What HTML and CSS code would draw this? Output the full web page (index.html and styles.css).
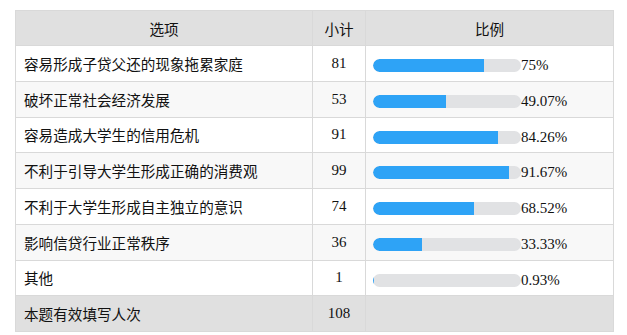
FILE: index.html
```html
<!DOCTYPE html>
<html lang="zh-CN">
<head>
<meta charset="utf-8">
<link rel="stylesheet" href="styles.css">
</head>
<body>
<table class="stats">
  <colgroup>
    <col class="c-opt"><col class="c-cnt"><col class="c-pct">
  </colgroup>
  <thead>
    <tr><th>选项</th><th>小计</th><th>比例</th></tr>
  </thead>
  <tbody>
    <tr><td class="opt">容易形成子贷父还的现象拖累家庭</td><td class="cnt">81</td><td class="pct"><div class="bar"><div class="fill" style="width:75%"></div></div><span class="num">75%</span></td></tr>
    <tr class="alt"><td class="opt">破坏正常社会经济发展</td><td class="cnt">53</td><td class="pct"><div class="bar"><div class="fill" style="width:49.07%"></div></div><span class="num">49.07%</span></td></tr>
    <tr><td class="opt">容易造成大学生的信用危机</td><td class="cnt">91</td><td class="pct"><div class="bar"><div class="fill" style="width:84.26%"></div></div><span class="num">84.26%</span></td></tr>
    <tr class="alt"><td class="opt">不利于引导大学生形成正确的消费观</td><td class="cnt">99</td><td class="pct"><div class="bar"><div class="fill" style="width:91.67%"></div></div><span class="num">91.67%</span></td></tr>
    <tr><td class="opt">不利于大学生形成自主独立的意识</td><td class="cnt">74</td><td class="pct"><div class="bar"><div class="fill" style="width:68.52%"></div></div><span class="num">68.52%</span></td></tr>
    <tr class="alt"><td class="opt">影响信贷行业正常秩序</td><td class="cnt">36</td><td class="pct"><div class="bar"><div class="fill" style="width:33.33%"></div></div><span class="num">33.33%</span></td></tr>
    <tr><td class="opt">其他</td><td class="cnt">1</td><td class="pct"><div class="bar"><div class="fill" style="width:0.93%"></div></div><span class="num">0.93%</span></td></tr>
  </tbody>
  <tfoot>
    <tr><td class="opt">本题有效填写人次</td><td class="cnt">108</td><td></td></tr>
  </tfoot>
</table>
</body>
</html>
```
FILE: styles.css
```css
html, body {
  margin: 0;
  padding: 0;
  background: #ffffff;
}
body {
  padding: 10px 0 0 15px;
  font-family: "Noto Sans CJK SC", "Noto Sans", sans-serif;
  color: #111111;
}
.stats {
  border-collapse: collapse;
  width: 598px;
  table-layout: fixed;
  font-size: 14.6px;
}
.c-opt { width: 297px; }
.c-cnt { width: 53px; }
.c-pct { width: 248px; }
.stats th, .stats td {
  border: 1px solid #d9d9d9;
  padding: 0;
  height: 34.75px;
  vertical-align: middle;
}
.stats th {
  background: #e0e0e0;
  font-weight: normal;
  text-align: center;
  height: 34px;
}
.stats tbody tr { background: #ffffff; }
.stats tbody tr.alt { background: #f8f8f8; }
.stats tfoot tr { background: #e0e0e0; }
.opt {
  padding-left: 8px !important;
  text-align: left;
  white-space: nowrap;
}
.cnt {
  text-align: center;
  font-family: "Liberation Serif", "Times New Roman", serif;
  font-size: 15px;
}
.pct {
  padding-left: 7px !important;
}
.pct .bar, .pct .num {
  display: inline-block;
  vertical-align: middle;
}
.bar {
  width: 148px;
  height: 13px;
  background: #e1e2e4;
  border-radius: 7px;
  overflow: hidden;
}
.fill {
  height: 100%;
  background: #2ea3f6;
  border-radius: 7px 0 0 7px;
}
.num {
  font-family: "Liberation Serif", "Times New Roman", serif;
  font-size: 15px;
}
```
